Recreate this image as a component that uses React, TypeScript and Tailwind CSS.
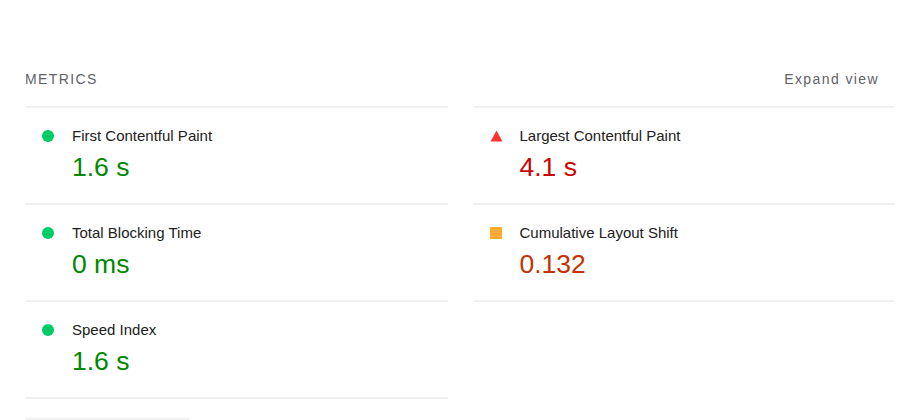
const metrics = [
  { label: "First Contentful Paint", value: "1.6 s", kind: "pass" },
  { label: "Largest Contentful Paint", value: "4.1 s", kind: "fail" },
  { label: "Total Blocking Time", value: "0 ms", kind: "pass" },
  { label: "Cumulative Layout Shift", value: "0.132", kind: "average" },
  { label: "Speed Index", value: "1.6 s", kind: "pass" },
];

const valueColor: Record<string, string> = {
  pass: "text-[#008800]",
  fail: "text-[#cc0000]",
  average: "text-[#c33300]",
};

const Icon = ({ kind }: { kind: string }) => {
  if (kind === "pass") return <span className="block size-3 rounded-full bg-[#00cc66]" />;
  if (kind === "average") return <span className="block size-3 bg-[#ffaa33]" />;
  return (
    <svg width="13" height="12" viewBox="0 0 13 12" className="block">
      <polygon points="6.5,0.5 12.5,11.5 0.5,11.5" fill="#ff3333" />
    </svg>
  );
};

const App = () => {
  return (
    <div
      className="w-[922px] h-[420px] overflow-hidden bg-white pl-[25px] pr-[27px]"
      style={{ fontFamily: '"Liberation Sans", Arial, sans-serif' }}
    >
      <div className="flex justify-between items-center mt-[70px] mb-[18px] h-[18px] text-[14px] tracking-[0.1em] text-[#5f6368]">
        <span>METRICS</span>
        <span className="mr-[16px]">Expand view</span>
      </div>
      <div className="grid grid-cols-2 gap-x-[25px]">
        {metrics.map((m, i) => (
          <div
            key={m.label}
            className={
              "border-b-2 border-[#f0f0f0] pl-[17px] pt-[18px] pb-[20px] " +
              (i < 2 ? "border-t-2" : "")
            }
          >
            <div className="flex items-center h-[20px]">
              <div className="w-[30px] flex items-center">
                <Icon kind={m.kind} />
              </div>
              <span className="text-[15px] text-[#212121]">{m.label}</span>
            </div>
            <div className={"ml-[30px] mt-[5px] text-[26.5px] leading-[32px] " + valueColor[m.kind]}>
              {m.value}
            </div>
          </div>
        ))}
      </div>
      <div className="mt-[19px] w-[165px] h-[30px] rounded-[3px] bg-[#f1f1f1]" />
    </div>
  );
};

export default App;
